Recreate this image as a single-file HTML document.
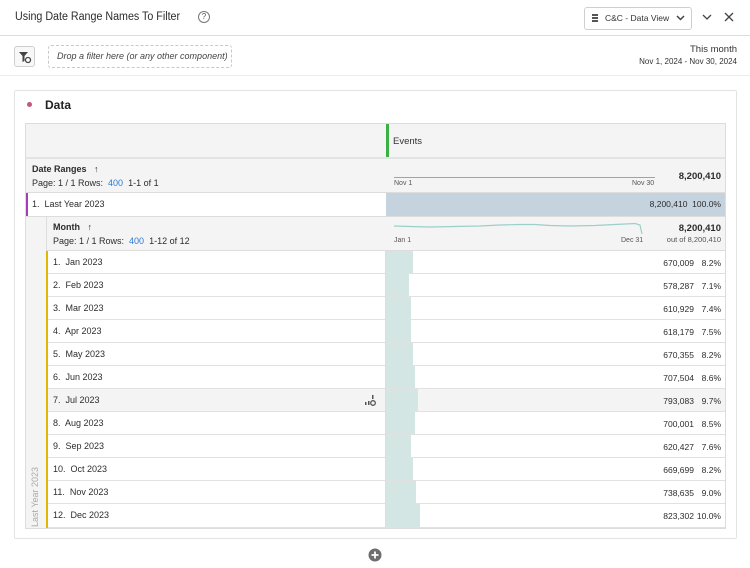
<!DOCTYPE html>
<html><head><meta charset="utf-8"><style>
*{box-sizing:border-box;margin:0;padding:0}
body{width:750px;height:568px;overflow:hidden;background:#fff;font-family:"Liberation Sans",sans-serif;color:#2c2c2c;position:relative}
.a{position:absolute}
.t{font-size:9.5px;white-space:nowrap}
.row{position:absolute;left:48px;width:677px;height:23px;border-bottom:1px solid #e1e1e1;background:#fff}
.row .lab{position:absolute;left:5px;top:6px;font-size:9px}
.row .bar{position:absolute;left:337px;top:0;height:22px;background:#d3e6e3}
.row .v{position:absolute;right:31px;top:7px;font-size:8.5px}
.row .p{position:absolute;right:4px;top:7px;font-size:8.5px}
.row .sep{position:absolute;left:337px;top:0;width:1px;height:23px;background:#ddd}
</style></head><body>
<div class="a" style="left:0;top:0;width:750px;height:36px;border-bottom:1px solid #dcdcdc"></div>
<div class="a t" style="left:15px;top:11px;font-size:11.5px;color:#2c2c2c;transform:scaleX(0.93);transform-origin:0 0">Using Date Range Names To Filter</div>
<div class="a" style="left:198px;top:11px;width:12px;height:12px;border:1px solid #777;border-radius:50%;font-size:8px;text-align:center;line-height:10px;color:#555">?</div>
<div class="a" style="left:584px;top:7px;width:108px;height:23px;border:1px solid #cfcfcf;border-radius:3px"></div>
<div class="a" style="left:592px;top:14px;width:6px;height:8px;border-top:2px solid #555;border-bottom:2px solid #555"><div style="margin-top:1px;height:2px;background:#555"></div></div>
<div class="a t" style="left:605px;top:13px;font-size:8.5px;color:#333">C&amp;C - Data View</div>
<svg class="a" style="left:676px;top:14px" width="9" height="8"><path d="M1 2l3.5 3.5L8 2" stroke="#444" stroke-width="1.5" fill="none"/></svg>
<svg class="a" style="left:702px;top:13px" width="10" height="9"><path d="M1 2l4 4 4-4" stroke="#444" stroke-width="1.3" fill="none"/></svg>
<svg class="a" style="left:724px;top:12px" width="10" height="10"><path d="M1 1l8 8M9 1L1 9" stroke="#444" stroke-width="1.3"/></svg>
<div class="a" style="left:0;top:75px;width:750px;height:1px;background:#ececec"></div>
<div class="a" style="left:14px;top:46px;width:21px;height:21px;border:1px solid #cfcfcf;border-radius:3px;background:#f8f8f8"></div>
<svg class="a" style="left:17px;top:49px" width="16" height="16"><path d="M2 3h9l-3.5 4v5l-2 1V7z" fill="#444"/><circle cx="11" cy="11" r="2.5" fill="#fff" stroke="#444" stroke-width="1.3"/></svg>
<div class="a" style="left:48px;top:45px;width:184px;height:23px;border:1px dashed #c8c8c8;border-radius:3px"></div>
<div class="a t" style="left:57px;top:51px;font-size:9px;font-style:italic;color:#444">Drop a filter here (or any other component)</div>
<div class="a t" style="right:13px;top:44px;font-size:9.5px;color:#333">This month</div>
<div class="a t" style="right:13px;top:57px;font-size:8px;color:#333">Nov 1, 2024 - Nov 30, 2024</div>
<div class="a" style="left:14px;top:90px;width:723px;height:449px;border:1px solid #e3e3e3;border-radius:2px"></div>
<div class="a" style="left:27px;top:102px;width:5px;height:5px;border-radius:50%;background:#c4587a"></div>
<div class="a" style="left:45px;top:98px;font-size:12px;font-weight:bold;color:#222">Data</div>
<div class="a" style="left:25px;top:123px;width:701px;height:406px;border:1px solid #dcdcdc;background:#f4f4f4"></div>
<div class="a" style="left:386px;top:124px;width:3px;height:34px;background:#3bb143"></div>
<div class="a t" style="left:393px;top:136px;color:#333">Events</div>
<div class="a" style="left:26px;top:157px;width:699px;height:2px;background:#e3e3e3"></div>
<div class="a t" style="left:32px;top:164px;font-weight:bold;font-size:9px">Date Ranges &nbsp; <span style="font-weight:normal">↑</span></div>
<div class="a t" style="left:32px;top:178px;font-size:9px">Page: 1 / 1 Rows: &nbsp;<span style="color:#2a7ad4">400</span> &nbsp;1-1 of 1</div>
<div class="a" style="left:394px;top:177px;width:261px;height:1px;background:#8fa6bd"></div>
<div class="a t" style="left:394px;top:180px;font-size:7px;color:#555">Nov 1</div>
<div class="a t" style="left:632px;top:180px;font-size:7px;color:#555">Nov 30</div>
<div class="a t" style="right:29px;top:171px;font-size:9.5px;font-weight:bold">8,200,410</div>
<div class="a" style="left:26px;top:192px;width:699px;height:1px;background:#ddd"></div>
<div class="a" style="left:26px;top:193px;width:360px;height:23px;background:#fff"></div>
<div class="a" style="left:26px;top:193px;width:2px;height:23px;background:#a53cb8"></div>
<div class="a t" style="left:32px;top:199px;font-size:9px">1.&nbsp; Last Year 2023</div>
<div class="a" style="left:386px;top:193px;width:339px;height:23px;background:#c5d3df"></div>
<div class="a t" style="right:29px;top:199px;font-size:8.5px">8,200,410&nbsp; 100.0%</div>
<div class="a" style="left:26px;top:216px;width:699px;height:1px;background:#ddd"></div>
<div class="a" style="left:46px;top:217px;width:1px;height:311px;background:#ddd"></div>
<div class="a t" style="left:53px;top:222px;font-weight:bold;font-size:9px">Month &nbsp; <span style="font-weight:normal">↑</span></div>
<div class="a t" style="left:53px;top:236px;font-size:9px">Page: 1 / 1 Rows: &nbsp;<span style="color:#2a7ad4">400</span> &nbsp;1-12 of 12</div>
<svg class="a" style="left:390px;top:218px" width="260" height="20"><path d="M4 8L20 8.5L40 9L65 8.5L90 8L110 7L130 6.5L145 6.5L160 7.5L180 8L205 7.5L225 6.5L245 5.5L250 7L252 16" stroke="#9ccfc8" stroke-width="1.2" fill="none"/></svg>
<div class="a t" style="left:394px;top:237px;font-size:7px;color:#555">Jan 1</div>
<div class="a t" style="left:621px;top:237px;font-size:7px;color:#555">Dec 31</div>
<div class="a t" style="right:29px;top:223px;font-size:9.5px;font-weight:bold">8,200,410</div>
<div class="a t" style="right:29px;top:235px;font-size:7.5px;color:#555">out of 8,200,410</div>
<div class="a" style="left:46px;top:250px;width:679px;height:1px;background:#ddd"></div>
<div class="a" style="left:46px;top:251px;width:2px;height:277px;background:#e0b800"></div>
<div class="a t" style="left:30px;top:527px;font-size:9px;color:#aaa;transform:rotate(-90deg);transform-origin:0 0">Last Year 2023</div>

<div class="row" style="top:251px"><div class="lab">1.&nbsp; Jan 2023</div><div class="bar" style="width:28px"></div><div class="sep"></div><div class="v">670,009</div><div class="p">8.2%</div></div>
<div class="row" style="top:274px"><div class="lab">2.&nbsp; Feb 2023</div><div class="bar" style="width:24px"></div><div class="sep"></div><div class="v">578,287</div><div class="p">7.1%</div></div>
<div class="row" style="top:297px"><div class="lab">3.&nbsp; Mar 2023</div><div class="bar" style="width:26px"></div><div class="sep"></div><div class="v">610,929</div><div class="p">7.4%</div></div>
<div class="row" style="top:320px"><div class="lab">4.&nbsp; Apr 2023</div><div class="bar" style="width:26px"></div><div class="sep"></div><div class="v">618,179</div><div class="p">7.5%</div></div>
<div class="row" style="top:343px"><div class="lab">5.&nbsp; May 2023</div><div class="bar" style="width:28px"></div><div class="sep"></div><div class="v">670,355</div><div class="p">8.2%</div></div>
<div class="row" style="top:366px"><div class="lab">6.&nbsp; Jun 2023</div><div class="bar" style="width:30px"></div><div class="sep"></div><div class="v">707,504</div><div class="p">8.6%</div></div>
<div class="row" style="top:389px;background:#f4f4f4"><div class="lab">7.&nbsp; Jul 2023</div><div class="bar" style="width:33px"></div><div class="sep"></div><div class="v">793,083</div><div class="p">9.7%</div>
<svg style="position:absolute;left:316px;top:5px" width="14" height="13"><rect x="1" y="8" width="1.5" height="3" fill="#555"/><rect x="4" y="7" width="1.5" height="4" fill="#555"/><rect x="8" y="1" width="1.5" height="4" fill="#555"/><circle cx="9" cy="9" r="2.3" fill="none" stroke="#555" stroke-width="1.3"/></svg></div>
<div class="row" style="top:412px"><div class="lab">8.&nbsp; Aug 2023</div><div class="bar" style="width:30px"></div><div class="sep"></div><div class="v">700,001</div><div class="p">8.5%</div></div>
<div class="row" style="top:435px"><div class="lab">9.&nbsp; Sep 2023</div><div class="bar" style="width:26px"></div><div class="sep"></div><div class="v">620,427</div><div class="p">7.6%</div></div>
<div class="row" style="top:458px"><div class="lab">10.&nbsp; Oct 2023</div><div class="bar" style="width:28px"></div><div class="sep"></div><div class="v">669,699</div><div class="p">8.2%</div></div>
<div class="row" style="top:481px"><div class="lab">11.&nbsp; Nov 2023</div><div class="bar" style="width:31px"></div><div class="sep"></div><div class="v">738,635</div><div class="p">9.0%</div></div>
<div class="row" style="top:504px;height:24px"><div class="lab">12.&nbsp; Dec 2023</div><div class="bar" style="width:35px;height:23px"></div><div class="sep"></div><div class="v">823,302</div><div class="p">10.0%</div></div>

<svg class="a" style="left:368px;top:548px" width="14" height="14"><circle cx="7" cy="7" r="6.5" fill="#6e6e6e"/><path d="M7 3.5v7M3.5 7h7" stroke="#fff" stroke-width="1.8"/></svg>
</body></html>
